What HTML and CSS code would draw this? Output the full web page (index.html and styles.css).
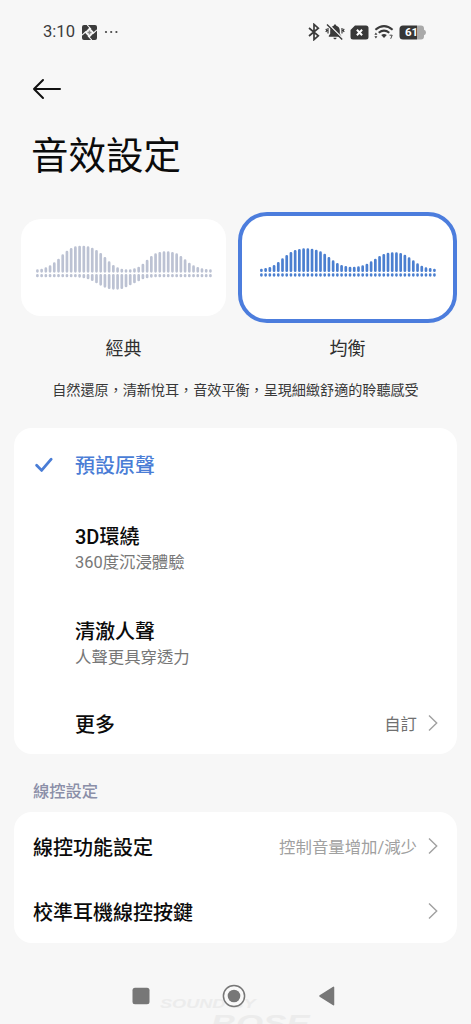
FILE: index.html
```html
<!DOCTYPE html>
<html lang="zh-Hant">
<head>
<meta charset="utf-8">
<title>音效設定</title>
<link rel="stylesheet" href="styles.css">
</head>
<body>
<div class="screen">
  <header class="status">
    <span class="clock">3:10</span>
    <svg class="app-icon" width="15" height="15" viewBox="0 0 15 15">
      <rect width="15" height="15" rx="2" fill="#3c3c3c"/>
      <path d="M7.5 2.600 12.200 7.500 7.500 12.400 2.800 7.500Z" fill="#f7f7f7"/>
      <path d="M5.200 0 9 4.200M15 4.800 11 8.500M9.800 15 6 10.800M0 10.200 4 6.500" stroke="#f7f7f7" stroke-width="1.100"/>
      <path d="M7.500 5.500v4M5.500 7.500h4" stroke="#888" stroke-width="1.400"/>
    </svg>
    <svg class="dots" width="15" height="4" viewBox="0 0 15 4" fill="#444"><circle cx="2" cy="2" r="1.1"/><circle cx="7.2" cy="2" r="1.1"/><circle cx="12.4" cy="2" r="1.1"/></svg>
    <div class="indicators">
      <svg width="12" height="18" viewBox="0 0 12 18" fill="none" stroke="#3a3a3a" stroke-width="1.700"><path d="M1 5 10.300 12.800 6 16.600V1.400L10.300 5.200 1 13"/></svg>
      <svg width="20" height="18" viewBox="0 0 20 18">
        <path d="M10 1.600c.8 0 1.200.5 1.300 1.200 2.400.6 3.500 2.500 3.500 4.800v3.200l1.400 2v.9H3.800v-.9l1.400-2V7.600c0-2.300 1.100-4.200 3.500-4.800.1-.7.5-1.200 1.300-1.200Z" fill="#3a3a3a"/>
        <path d="M8.400 14.700h3.200c-.2 1-.8 1.500-1.600 1.500s-1.400-.5-1.600-1.500Z" fill="#3a3a3a"/>
        <path d="M3.200 1 18.200 16" stroke="#f7f7f7" stroke-width="1.500"/>
        <path d="M2 1.400 17.200 16.600" stroke="#3a3a3a" stroke-width="1.400"/>
        <path d="m.8 5.800 1.100 1.600-1.100 1.600M3 5v5.500M19.200 5.800l-1.100 1.600 1.100 1.600M17 5v5.500" stroke="#3a3a3a" stroke-width="1.200" fill="none"/>
      </svg>
      <svg width="19" height="15" viewBox="0 0 19 15"><path d="M5 .5h11Q18.500 .5 18.500 3v9q0 2.500-2.500 2.500H3Q.5 14.500.5 12V5Z" fill="#383838"/><path d="m6.900 4.800 5.200 5.400m0-5.400-5.200 5.400" stroke="#fff" stroke-width="2"/></svg>
      <svg width="20" height="18" viewBox="0 0 20 18" fill="none" stroke="#3a3a3a" stroke-width="2">
        <path d="M1.400 6.800q8.600-7.400 17.200 0M4.700 9.800q5.300-4.300 10.600 0"/>
        <path d="M7.200 12q2.800-2 5.600 0L10 15Z" fill="#3a3a3a" stroke="none"/>
        <path d="m.4 11.800 1.500-2.200 1.500 2.200ZM.4 13.200l1.500 2.200 1.500-2.200Z" fill="#3a3a3a" stroke="none"/>
        <path d="M15.600 12.200h2.600l-1.500 3.600" stroke-width=".9"/>
      </svg>
      <div class="battery">
        <svg width="28" height="15" viewBox="0 0 28 15"><path d="M18 .5h4Q25 .5 25 3.500v1.200q2 .8 2 2.800t-2 2.800v1.200q0 3-3 3h-4Z" fill="#a9a9a9"/><path d="M4 .5h14v14H4Q.5 14.500.5 11V4Q.5.5 4 .5Z" fill="#363636"/></svg>
        <span class="level">61</span>
      </div>
    </div>
  </header>

  <div class="toolbar">
    <svg width="30" height="22" viewBox="0 0 30 22" fill="none" stroke="#111" stroke-width="2" stroke-linecap="round" stroke-linejoin="round"><path d="M28 11H2M11 2 2 11l9 9"/></svg>
  </div>
  <h1 class="title">音效設定</h1>

  <div class="modes">
    <div class="mode">
      <div class="frame"><div class="card"><svg class="wave" data-wave="classic" width="178" height="98" viewBox="0 0 178 98"></svg></div></div>
      <span class="mode-name">經典</span>
    </div>
    <div class="mode">
      <div class="frame selected"><div class="card"><svg class="wave" data-wave="balanced" width="178" height="98" viewBox="0 0 178 98"></svg></div></div>
      <span class="mode-name">均衡</span>
    </div>
  </div>
  <p class="description">自然還原，清新悅耳，音效平衡，呈現細緻舒適的聆聽感受</p>

  <section class="panel presets">
    <div class="row row-active">
      <svg class="check" width="20" height="16" viewBox="0 0 20 16" fill="none" stroke="#4a7dd6" stroke-width="2.800" stroke-linecap="round" stroke-linejoin="round"><path d="m2.600 8.200 5 5.200L17.200 2.200"/></svg>
      <span class="name active">預設原聲</span>
    </div>
    <div class="row row-detail">
      <div class="stack"><span class="name">3D環繞</span><span class="sub">360度沉浸體驗</span></div>
    </div>
    <div class="row row-detail">
      <div class="stack"><span class="name">清澈人聲</span><span class="sub">人聲更具穿透力</span></div>
    </div>
    <div class="row row-more">
      <span class="name">更多</span>
      <span class="value">自訂</span>
      <svg class="chevron" width="10" height="18" viewBox="0 0 10 18"><path d="m1 1.500 7.700 7.500L1 16.500"/></svg>
    </div>
  </section>

  <h2 class="section-title">線控設定</h2>
  <section class="panel controls">
    <div class="row">
      <span class="name">線控功能設定</span>
      <span class="value light">控制音量增加/減少</span>
      <svg class="chevron" width="10" height="18" viewBox="0 0 10 18"><path d="m1 1.500 7.700 7.500L1 16.500"/></svg>
    </div>
    <div class="row">
      <span class="name">校準耳機線控按鍵</span>
      <span class="value"></span>
      <svg class="chevron" width="10" height="18" viewBox="0 0 10 18"><path d="m1 1.500 7.700 7.500L1 16.500"/></svg>
    </div>
  </section>

  <nav class="navbar">
    <div class="watermark"><span class="mark-top">SOUND BY</span><span class="mark-bottom">BOSE</span></div>
    <svg width="18" height="18" viewBox="0 0 18 18"><rect x=".5" y=".7" width="17" height="16.600" rx="2.500" fill="#777"/></svg>
    <svg width="24" height="24" viewBox="0 0 24 24"><circle cx="12" cy="12" r="10.600" fill="#f9f9f9" stroke="#777" stroke-width="1.500"/><circle cx="12" cy="12" r="6.300" fill="#777"/></svg>
    <svg width="18" height="20" viewBox="0 0 18 20"><path d="M2 10 15.500 1.300v17.400Z" fill="#777" stroke="#777" stroke-width="1.500" stroke-linejoin="round"/></svg>
  </nav>
</div>
<script src="waves.js"></script>
</body>
</html>
```
FILE: styles.css
```css
* { box-sizing: border-box; }

body {
  margin: 0;
  background: #f7f7f7;
  color: #0b0b0b;
  font-family: Roboto, "Noto Sans CJK TC", sans-serif;
}

.screen {
  display: flex;
  flex-direction: column;
  height: 1024px;
  overflow: hidden;
}

svg { display: block; flex: none; }

.status {
  display: flex;
  align-items: center;
  height: 64px;
  padding: 0 44px 0 43px;
}
.clock { width: 39px; font-size: 16.6px; line-height: 20px; color: #3c3c3c; }
.dots { margin-left: 7px; }
.indicators { display: flex; align-items: center; gap: 5px; margin-left: auto; }
.battery { position: relative; }
.level {
  position: absolute;
  left: 6px;
  top: 1px;
  font-size: 11.5px;
  line-height: 13px;
  font-weight: 700;
  color: #fff;
}

.toolbar { display: flex; align-items: center; height: 50px; padding-left: 32px; }

.title {
  margin: 17px 0 0 31px;
  font-size: 37.5px;
  line-height: 50px;
  font-weight: 400;
}

.modes { display: flex; justify-content: space-between; margin-top: 31px; padding: 0 14px; }
.mode { display: flex; flex-direction: column; align-items: center; }
.frame { width: 219px; height: 111px; padding: 7px; border-radius: 29px; }
.frame.selected { padding: 3px; border: 4px solid #4c7ddd; background: #fff; }
.card {
  display: flex;
  justify-content: center;
  height: 97px;
  border-radius: 20px;
  background: #fff;
}
.mode-name { margin-top: 14px; font-size: 18px; line-height: 24px; color: #303030; }

.wave { fill: none; stroke-width: 2.7; stroke-linecap: round; }
.wave[data-wave="classic"] { stroke: #bcc2d3; }
.wave[data-wave="balanced"] { stroke: #4b7fd0; }

.description {
  margin: 19px 0 0;
  font-size: 14.1px;
  line-height: 20px;
  text-align: center;
  white-space: nowrap;
  color: #383838;
}

.panel { margin: 0 14px; border-radius: 18px; background: #fff; }
.row { display: flex; align-items: center; padding: 0 19px 0 19px; }
.name { font-size: 20px; line-height: 28px; font-weight: 500; }
.name.active { color: #4a7dd6; }
.stack { display: flex; flex-direction: column; }
.sub { font-size: 16.4px; line-height: 24px; color: #777; }
.value { margin-left: auto; font-size: 16.4px; line-height: 24px; color: #707070; }
.value.light { color: #a0a0a0; }
.chevron { margin: -4px 0 0 11px; fill: none; stroke: #a0a0a0; stroke-width: 1.4; }

.presets { height: 326px; margin-top: 28px; padding-top: 5px; }
.presets .row { padding-left: 61px; }
.presets .row-active { height: 66px; padding-left: 20px; }
.check { margin: -3px 21px 0 0; }
.row-detail { height: 95px; padding-top: 4px; }
.row-more { height: 66px; margin-top: 3px; }

.section-title {
  margin: 26px 0 0 33px;
  font-size: 16.3px;
  line-height: 24px;
  font-weight: 500;
  color: #8b8fa8;
}
.controls { height: 131px; margin-top: 8px; padding-top: 3px; }
.controls .row { height: 65.5px; }

.navbar {
  position: relative;
  display: flex;
  flex: 1;
  align-items: flex-start;
  justify-content: space-between;
  padding: 41px 135px 0 132px;
}
.navbar svg { position: relative; }
.navbar svg:nth-of-type(1) { margin-top: 3px; }
.navbar svg:nth-of-type(3) { margin-top: 2px; }
.watermark {
  position: absolute;
  left: 160px;
  top: 55px;
  color: #ececec;
  font-family: "Liberation Sans", sans-serif;
  font-weight: 700;
  font-style: italic;
  white-space: nowrap;
  transform: scaleX(1.45);
  transform-origin: left;
}
.mark-top { display: block; font-size: 12.5px; line-height: 12px; letter-spacing: 0; }
.mark-bottom { display: block; margin-left: 35px; font-size: 24px; line-height: 27px; letter-spacing: 0; }
```
FILE: waves.js
```js
// Bar edges are measured in thirds of a pixel from the card's upper edge.
const waves = {
  classic: {
    base: 161, under: 165,
    tops: [151,149,145,139,130,119,106,95,87,82,80,80,82,86,93,102,114,127,138,145,149,151,151,148,143,134,122,111,103,99,97,97,99,103,111,121,131,139,144,148,150,151],
    bottoms: [175,175,175,175,175,175,175,175,175,175,176,178,181,186,193,200,206,210,212,212,210,205,199,193,187,181,178,176]
  },
  balanced: {
    base: 159, under: 163,
    tops: [149,147,144,138,129,118,108,99,93,90,88,88,89,92,97,104,114,124,132,138,141,143,143,142,139,134,127,119,111,105,101,100,100,102,107,115,124,133,140,145,147,149],
    bottoms: []
  }
};

document.querySelectorAll(".wave").forEach((svg) => {
  const wave = waves[svg.dataset.wave];
  const cap = 1.35;
  let d = "";
  wave.tops.forEach((top, i) => {
    const x = (2.4 + i * 4.22).toFixed(2);
    const bottom = wave.bottoms[i] || wave.under + 10;
    d += `M${x} ${top / 3 + cap}V${wave.base / 3 - cap}`;
    d += `M${x} ${wave.under / 3 + cap}V${bottom / 3 - cap}`;
  });
  const path = document.createElementNS("http://www.w3.org/2000/svg", "path");
  path.setAttribute("d", d);
  svg.append(path);
});
```
